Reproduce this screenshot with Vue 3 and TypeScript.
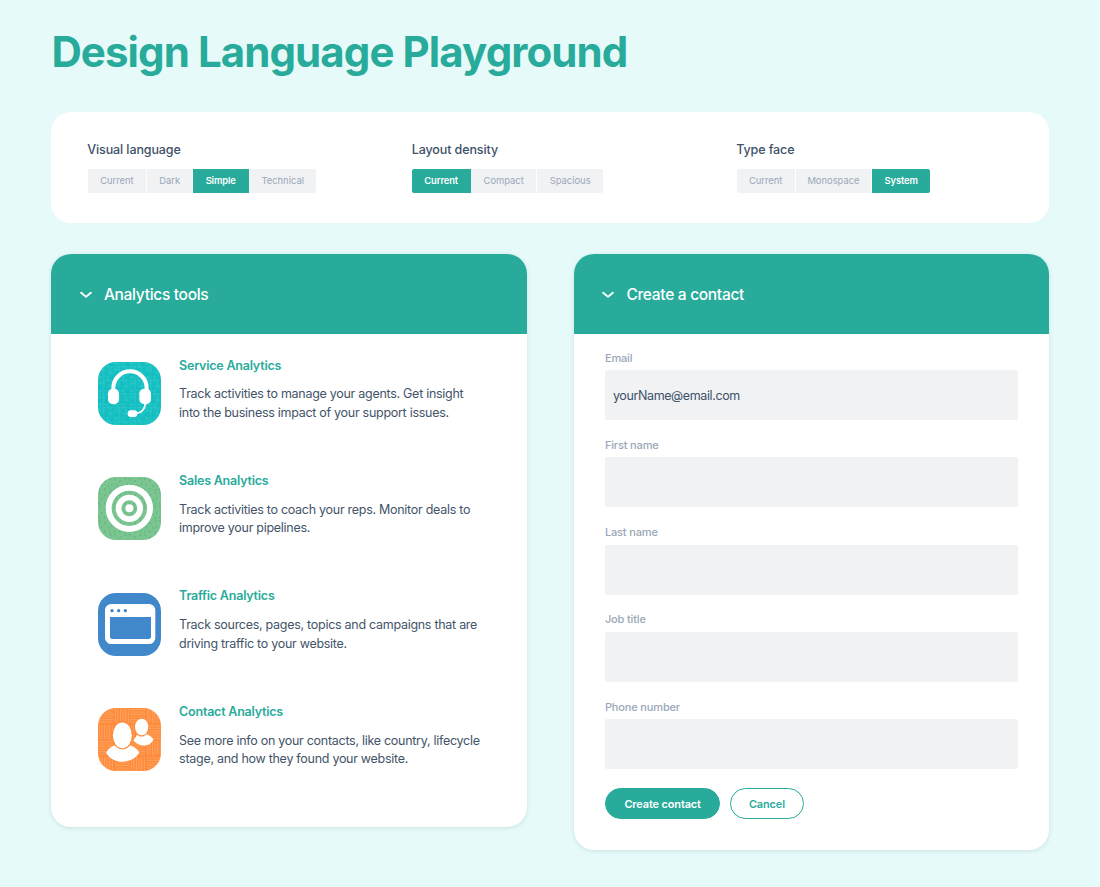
<script setup lang="ts">
import { ref } from 'vue'

interface Option { label: string; width: number }
interface Control { name: string; options: Option[]; selected: string }
interface Tool { id: string; title: string; lines: [string, string] }
interface Field { label: string; value: string }

const controls = ref<Control[]>([
  {
    name: 'Visual language',
    selected: 'Simple',
    options: [
      { label: 'Current', width: 59.5 },
      { label: 'Dark', width: 46 },
      { label: 'Simple', width: 56 },
      { label: 'Technical', width: 67 },
    ],
  },
  {
    name: 'Layout density',
    selected: 'Current',
    options: [
      { label: 'Current', width: 59 },
      { label: 'Compact', width: 66 },
      { label: 'Spacious', width: 66 },
    ],
  },
  {
    name: 'Type face',
    selected: 'System',
    options: [
      { label: 'Current', width: 59 },
      { label: 'Monospace', width: 76.5 },
      { label: 'System', width: 58 },
    ],
  },
])

const tools: Tool[] = [
  { id: 'service', title: 'Service Analytics', lines: ['Track activities to manage your agents. Get insight', 'into the business impact of your support issues.'] },
  { id: 'sales', title: 'Sales Analytics', lines: ['Track activities to coach your reps. Monitor deals to', 'improve your pipelines.'] },
  { id: 'traffic', title: 'Traffic Analytics', lines: ['Track sources, pages, topics and campaigns that are', 'driving traffic to your website.'] },
  { id: 'contact', title: 'Contact Analytics', lines: ['See more info on your contacts, like country, lifecycle', 'stage, and how they found your website.'] },
]

const fields = ref<Field[]>([
  { label: 'Email', value: 'yourName@email.com' },
  { label: 'First name', value: '' },
  { label: 'Last name', value: '' },
  { label: 'Job title', value: '' },
  { label: 'Phone number', value: '' },
])
</script>

<template>
  <main class="page">
    <h1 class="title">Design Language Playground</h1>

    <section class="controls">
      <div v-for="c in controls" :key="c.name" class="control">
        <h2 class="control-name">{{ c.name }}</h2>
        <div class="segments">
          <button
            v-for="o in c.options"
            :key="o.label"
            class="segment"
            :class="{ active: o.label === c.selected }"
            :style="{ width: o.width + 'px' }"
            @click="c.selected = o.label"
          >{{ o.label }}</button>
        </div>
      </div>
    </section>

    <div class="cards">
      <section class="card">
        <header class="card-head">
          <svg class="chevron" viewBox="0 0 12 8"><path d="M1.2 1.7 6 5.9 10.8 1.7" /></svg>
          <span>Analytics tools</span>
        </header>
        <div class="tools">
          <article v-for="t in tools" :key="t.id" class="tool">
            <svg v-if="t.id === 'service'" class="tool-icon" viewBox="0 0 189 189">
              <defs>
                <pattern id="weave" width="47" height="41" patternUnits="userSpaceOnUse">
                  <path d="M0 5H30M12 14H47M0 24H22M28 32H47M6 0V24M17 10V41M29 0V18M38 16V41" stroke="#5ad5d5" stroke-width="1.6" opacity=".6" />
                  <path d="M0 9H47M0 37H40M23 0V41M43 0V30" stroke="#08aeb4" stroke-width="1.5" opacity=".55" />
                </pattern>
              </defs>
              <rect width="189" height="189" rx="54" fill="#14c0c2" />
              <rect width="189" height="189" rx="54" fill="url(#weave)" />
              <path d="M46 86V78a50 50 0 0 1 100 0v8" fill="none" stroke="#fff" stroke-width="12" />
              <rect x="30" y="80" width="33" height="47" rx="15" fill="#fff" />
              <rect x="124" y="80" width="35" height="47" rx="15" fill="#fff" />
              <path d="M142 123C141 143 131 153 112 155" fill="none" stroke="#fff" stroke-width="5.5" />
              <rect x="89" y="145" width="29" height="20" rx="9.5" fill="#fff" />
            </svg>
            <svg v-else-if="t.id === 'sales'" class="tool-icon" viewBox="0 0 189 189">
              <defs>
                <pattern id="flecks" width="45" height="42" patternUnits="userSpaceOnUse">
                  <path d="M5 4l2 5M22 10l-2 5M37 3l1 5M11 22l-2 5M30 25l2 5M42 20l-2 4M4 36l2 4M20 35l1 5M38 36l-2 4" stroke="#55a878" stroke-width="2.6" stroke-linecap="round" opacity=".85" />
                </pattern>
              </defs>
              <rect width="189" height="189" rx="54" fill="#7bc591" />
              <rect width="189" height="189" rx="54" fill="url(#flecks)" />
              <circle cx="94" cy="94" r="62" fill="none" stroke="#fff" stroke-width="18" />
              <circle cx="94" cy="94" r="32.5" fill="none" stroke="#fff" stroke-width="17" />
              <circle cx="94" cy="94" r="12" fill="#fff" />
            </svg>
            <svg v-else-if="t.id === 'traffic'" class="tool-icon" viewBox="0 0 189 189">
              <defs>
                <pattern id="dashes" width="54" height="24" patternUnits="userSpaceOnUse">
                  <path d="M0 4H16M26 4H43M9 10H29M38 10H54M0 16H12M22 16H36M31 22H50M2 22H18" stroke="#4678cf" stroke-width="1.8" />
                </pattern>
              </defs>
              <rect width="189" height="189" rx="54" fill="#3f8bca" />
              <rect width="189" height="189" rx="54" fill="url(#dashes)" />
              <path fill="#fff" fill-rule="evenodd" d="M40 33H153a19 19 0 0 1 19 19V134a19 19 0 0 1-19 19H40a19 19 0 0 1-19-19V52a19 19 0 0 1 19-19ZM36 72V131a7 7 0 0 0 7 7H152a7 7 0 0 0 7-7V72Z" />
              <g fill="#3f86ca"><circle cx="42" cy="53" r="5" /><circle cx="62" cy="53" r="5" /><circle cx="82" cy="53" r="5" /></g>
            </svg>
            <svg v-else class="tool-icon" viewBox="0 0 189 189">
              <defs>
                <pattern id="hatch" width="96" height="96" patternUnits="userSpaceOnUse">
                  <path d="M0 5H46M2 12H44M0 19H47M3 27H45M0 35H46M1 42H44M53 0V46M60 3V44M68 0V47M75 2V45M83 0V43M91 2V46M5 50V94M12 52V96M20 50V92M27 53V95M35 50V96M43 51V94M50 54H94M52 61H96M50 69H93M52 76H96M50 84H94M53 91H96" stroke="#ffb57e" stroke-width="1.7" />
                </pattern>
              </defs>
              <rect width="189" height="189" rx="54" fill="#fd8b3b" />
              <rect width="189" height="189" rx="54" fill="url(#hatch)" />
              <path d="M106 97C111 91 115 83 118 80C125 88 138 88 145 78C154 81 162 88 166 94C158 118 123 119 106 97Z" fill="#fff" />
              <ellipse cx="131" cy="57" rx="22" ry="27" fill="#fd8b3b" />
              <ellipse cx="131" cy="57" rx="20" ry="25" fill="#fff" />
              <path d="M24 134C31 122 42 115 51 112C64 128 84 128 96 112C107 116 118 124 124 133C104 171 44 170 24 134Z" fill="#fff" />
              <ellipse cx="73" cy="82" rx="32" ry="42" fill="#fd8b3b" />
              <ellipse cx="73" cy="82" rx="28.5" ry="38.5" fill="#fff" />
            </svg>
            <div class="tool-text">
              <h3 class="tool-title">{{ t.title }}</h3>
              <p class="tool-desc">{{ t.lines[0] }}<br />{{ t.lines[1] }}</p>
            </div>
          </article>
        </div>
      </section>

      <section class="card">
        <header class="card-head">
          <svg class="chevron" viewBox="0 0 12 8"><path d="M1.2 1.7 6 5.9 10.8 1.7" /></svg>
          <span>Create a contact</span>
        </header>
        <form class="form" @submit.prevent>
          <label v-for="f in fields" :key="f.label" class="field">
            <span class="field-label">{{ f.label }}</span>
            <input v-model="f.value" class="field-input" type="text" />
          </label>
          <div class="actions">
            <button class="btn primary" type="submit">Create contact</button>
            <button class="btn secondary" type="button">Cancel</button>
          </div>
        </form>
      </section>
    </div>
  </main>
</template>

<style>
body {
  background: #e6fbf9;
}
</style>

<style scoped>
.page {
  box-sizing: border-box;
  width: 1100px;
  height: 887px;
  padding: 24px 50.6px 0 51.4px;
  overflow: hidden;
  background: #e6fbf9;
  color: #425b76;
  font-family: Inter, "Liberation Sans", sans-serif;
}
h1, h2, h3, p { margin: 0; }
button, input { font-family: inherit; }
.title {
  height: 88px;
  line-height: 56px;
  font-size: 42px;
  font-weight: 700;
  letter-spacing: -.91px;
  color: #28ab9b;
  white-space: nowrap;
}
.controls {
  box-sizing: border-box;
  height: 111px;
  padding: 28px 0 0 35.8px;
  display: grid;
  grid-template-columns: repeat(3, 324.5px);
  border-radius: 20px;
  background: #fff;
  overflow: hidden;
}
.control-name {
  height: 28px;
  padding-top: 1px;
  line-height: 18px;
  font-size: 12.5px;
  font-weight: 500;
  letter-spacing: -.1px;
  color: #3d5168;
}
.segments {
  display: flex;
  width: max-content;
  margin-left: .5px;
  border-radius: 2px;
  overflow: hidden;
}
.segment {
  box-sizing: border-box;
  height: 23.5px;
  padding: 0;
  border: 0;
  border-right: 1px solid #fff;
  background: #f1f2f4;
  color: #9aa7b8;
  font-size: 9.4px;
  white-space: nowrap;
}
.segment:last-child { border-right: 0; }
.segment.active {
  border-right-color: #28ab9b;
  background: #28ab9b;
  color: #fff;
  font-weight: 600;
  letter-spacing: -.12px;
}
.cards {
  display: grid;
  grid-template-columns: 475.5px 475.5px;
  justify-content: space-between;
  align-items: start;
  margin-top: 31px;
}
.card {
  border-radius: 20px;
  background: #fff;
  box-shadow: 0 1px 4px rgba(45, 90, 100, .16);
  overflow: hidden;
}
.card-head {
  display: flex;
  align-items: center;
  gap: 12px;
  box-sizing: border-box;
  height: 80px;
  padding: 1px 0 0 28.5px;
  background: #28ab9b;
  color: #fff;
  font-size: 15.5px;
  font-weight: 550;
  letter-spacing: -.3px;
}
.chevron {
  width: 12px;
  height: 8px;
  fill: none;
  stroke: #fff;
  stroke-width: 1.9;
  stroke-linecap: round;
  stroke-linejoin: round;
}
.tools {
  box-sizing: border-box;
  height: 493px;
  padding: 21.6px 0 0 46.5px;
}
.tool {
  display: flex;
  gap: 18.2px;
  height: 115.4px;
}
.tool-icon {
  flex: none;
  width: 63px;
  height: 63px;
  margin-top: 6.4px;
}
.tool-title {
  line-height: 20px;
  font-size: 12.5px;
  font-weight: 600;
  letter-spacing: -.22px;
  color: #28ab9b;
}
.tool-desc {
  margin-top: 9.8px;
  line-height: 18.7px;
  font-size: 12.5px;
  letter-spacing: -.28px;
  color: #435469;
  white-space: nowrap;
}
.form {
  box-sizing: border-box;
  height: 516px;
  padding: 15.6px 31.5px 0 31px;
}
.field {
  display: block;
  height: 87.3px;
}
.field-label {
  display: block;
  height: 20.6px;
  line-height: 17px;
  font-size: 11px;
  font-weight: 550;
  letter-spacing: -.15px;
  color: #9aa7b8;
}
.field-input {
  display: block;
  box-sizing: border-box;
  width: 100%;
  height: 50px;
  padding: 0 8px;
  border: 0;
  border-radius: 2px;
  background: #f1f2f4;
  color: #3d5168;
  font-size: 12.5px;
  letter-spacing: -.38px;
}
.actions {
  display: flex;
  gap: 9.5px;
  margin-top: 2px;
}
.btn {
  box-sizing: border-box;
  height: 31px;
  padding: 0;
  border: 1px solid #28ab9b;
  border-radius: 16px;
  font-size: 10.9px;
  font-weight: 600;
  letter-spacing: -.1px;
}
.primary { width: 115.5px; background: #28ab9b; color: #fff; }
.secondary { width: 74px; background: #fff; color: #28ab9b; }
</style>
